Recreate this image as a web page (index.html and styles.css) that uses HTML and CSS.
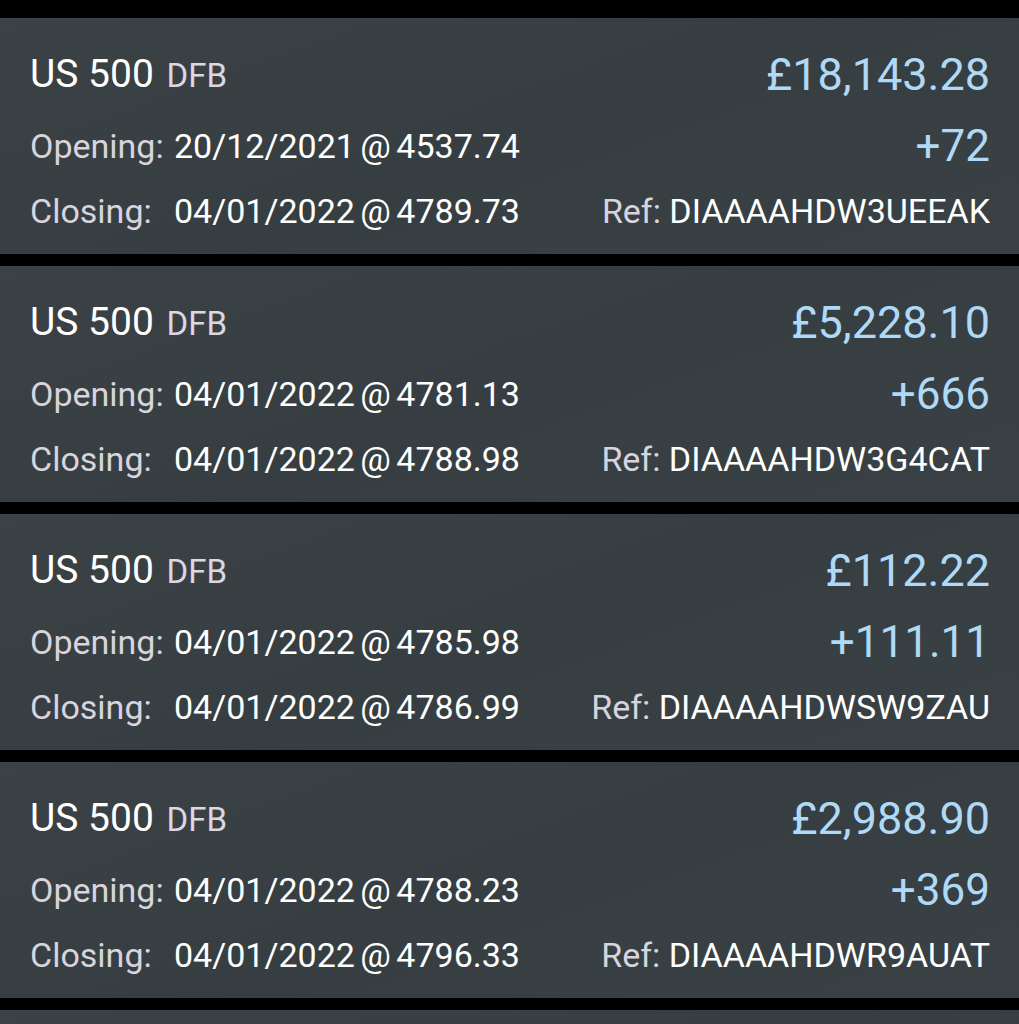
FILE: index.html
```html
<!DOCTYPE html>
<html lang="en">
<head>
  <meta charset="UTF-8" />
  <meta name="viewport" content="width=device-width, initial-scale=1.0"/>
  <title>Closed Positions</title>
  <link rel="stylesheet" href="styles.css">
</head>
<body>

  <div class="trade-list">

    <div class="trade">
      <div class="row row-top">
        <div class="market">US 500 <span class="type">DFB</span></div>
        <div class="amount">£18,143.28</div>
      </div>
      <div class="row row-open">
        <div class="detail"><span class="label">Opening:</span><span class="value">20/12/2021 @ 4537.74</span></div>
        <div class="points">+72</div>
      </div>
      <div class="row row-close">
        <div class="detail"><span class="label">Closing:</span><span class="value">04/01/2022 @ 4789.73</span></div>
        <div class="ref"><span class="label">Ref:</span> DIAAAAHDW3UEEAK</div>
      </div>
    </div>

    <div class="trade">
      <div class="row row-top">
        <div class="market">US 500 <span class="type">DFB</span></div>
        <div class="amount">£5,228.10</div>
      </div>
      <div class="row row-open">
        <div class="detail"><span class="label">Opening:</span><span class="value">04/01/2022 @ 4781.13</span></div>
        <div class="points">+666</div>
      </div>
      <div class="row row-close">
        <div class="detail"><span class="label">Closing:</span><span class="value">04/01/2022 @ 4788.98</span></div>
        <div class="ref"><span class="label">Ref:</span> DIAAAAHDW3G4CAT</div>
      </div>
    </div>

    <div class="trade">
      <div class="row row-top">
        <div class="market">US 500 <span class="type">DFB</span></div>
        <div class="amount">£112.22</div>
      </div>
      <div class="row row-open">
        <div class="detail"><span class="label">Opening:</span><span class="value">04/01/2022 @ 4785.98</span></div>
        <div class="points">+111.11</div>
      </div>
      <div class="row row-close">
        <div class="detail"><span class="label">Closing:</span><span class="value">04/01/2022 @ 4786.99</span></div>
        <div class="ref"><span class="label">Ref:</span> DIAAAAHDWSW9ZAU</div>
      </div>
    </div>

    <div class="trade">
      <div class="row row-top">
        <div class="market">US 500 <span class="type">DFB</span></div>
        <div class="amount">£2,988.90</div>
      </div>
      <div class="row row-open">
        <div class="detail"><span class="label">Opening:</span><span class="value">04/01/2022 @ 4788.23</span></div>
        <div class="points">+369</div>
      </div>
      <div class="row row-close">
        <div class="detail"><span class="label">Closing:</span><span class="value">04/01/2022 @ 4796.33</span></div>
        <div class="ref"><span class="label">Ref:</span> DIAAAAHDWR9AUAT</div>
      </div>
    </div>

    <div class="trade"></div>

  </div>

</body>
</html>
```

FILE: styles.css
```css
body {
  font-family: Roboto, "Liberation Sans", sans-serif;
  background-color: #000;
  color: #fff;
  margin: 0;
  padding: 0;
  overflow: hidden;
}

.trade-list {
  display: flex;
  flex-direction: column;
  gap: 12px;
  padding-top: 18px;
}

.trade {
  background: linear-gradient(160deg, #3a4245, #363e41 50%, #394144);
  height: 236px;
  box-sizing: border-box;
  padding: 30px 29px 0 30px;
  flex-shrink: 0;
}

.row {
  display: flex;
  justify-content: space-between;
  align-items: center;
}

.row-top {
  height: 52px;
}

.row-open {
  height: 48px;
  margin-top: 22px;
}

.row-close {
  height: 48px;
  margin-top: 17px;
}

.market {
  font-size: 39px;
}

.type {
  font-size: 33px;
  color: #dcd8e2;
  margin-left: 3px;
}

.amount,
.points {
  color: #afd9f7;
}

.amount {
  font-size: 45px;
}

.points {
  font-size: 44px;
}

.detail,
.ref {
  font-size: 34px;
  white-space: nowrap;
}

.value {
  word-spacing: -3px;
}

.label {
  color: #d8d4de;
}

.detail .label {
  display: inline-block;
  width: 144px;
}
```
